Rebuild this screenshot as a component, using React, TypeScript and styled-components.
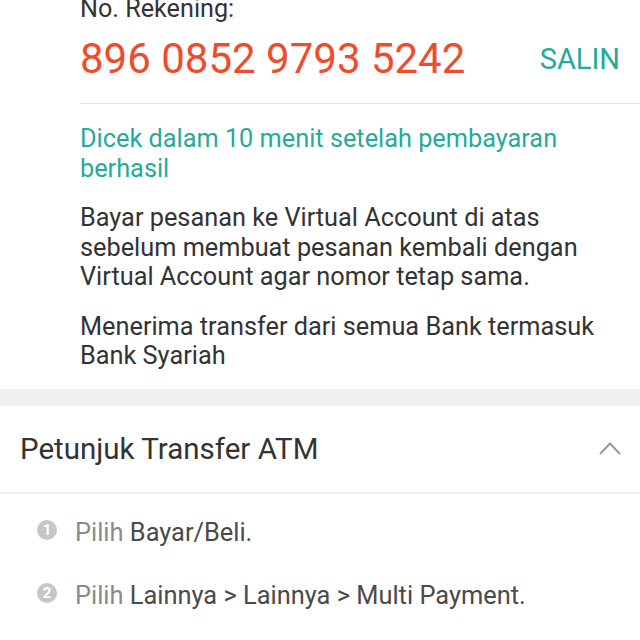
import React from "react";
import styled, { createGlobalStyle } from "styled-components";

const Global = createGlobalStyle`
  html, body { margin: 0; padding: 0; background: #fff; }
  body { font-family: Roboto, "Liberation Sans", sans-serif; color: #333; overflow: hidden; }
`;

const Page = styled.div`
  width: 640px;
  height: 640px;
  overflow: hidden;
  background: #fff;
`;

const AccountSection = styled.section`
  padding-left: 80px;
  padding-bottom: 18px;
`;

const Label = styled.div`
  margin-top: -6px;
  font-size: 25.2px;
  line-height: 30px;
  color: #333;
`;

const NumberRow = styled.div`
  display: flex;
  align-items: center;
  justify-content: space-between;
  margin-top: 10px;
  padding-right: 20px;
  padding-bottom: 19px;
  border-bottom: 1px solid #e4e4e4;
`;

const AccountNumber = styled.div`
  font-size: 42px;
  line-height: 50px;
  color: #ee4d2d;
`;

const CopyButton = styled.button`
  border: none;
  background: none;
  padding: 0;
  font-family: inherit;
  font-size: 29px;
  line-height: 30px;
  color: #26aa99;
  cursor: pointer;
`;

const Info = styled.div`
  padding-right: 30px;
  padding-top: 20px;
`;

const Para = styled.p<{ $accent?: boolean }>`
  margin: 0 0 20px;
  font-size: 25.3px;
  line-height: 29.5px;
  color: ${(p) => (p.$accent ? "#26aa99" : "#333")};
  &:last-child { margin-bottom: 0; }
`;

const Band = styled.div`
  height: 17px;
  background: #efefef;
`;

const AccordionHeader = styled.div`
  display: flex;
  align-items: center;
  justify-content: space-between;
  height: 86px;
  padding: 0 18px 0 20px;
  border-bottom: 2px solid #efefef;
`;

const HeaderTitle = styled.div`
  font-size: 29.5px;
  color: #333;
`;

const Steps = styled.ol`
  list-style: none;
  margin: 0;
  padding: 23px 20px 0 37px;
  display: flex;
  flex-direction: column;
  gap: 33px;
`;

const Step = styled.li`
  display: flex;
  align-items: center;
  gap: 18px;
  font-size: 25.4px;
  line-height: 30px;
`;

const Badge = styled.span`
  flex: none;
  width: 20px;
  height: 20px;
  border-radius: 50%;
  background: #c6c6c6;
  color: #fff;
  font-size: 15px;
  font-weight: 700;
  line-height: 20px;
  text-align: center;
  margin-top: -3px;
`;

const Muted = styled.span`
  color: #8a8a8a;
`;

const Strong = styled.span`
  color: #4a4a4a;
`;

const Chevron = () => (
  <svg width="24" height="16" viewBox="0 0 24 16" fill="none">
    <path d="M2 13 L12 2.5 L22 13" stroke="#999" strokeWidth="2" />
  </svg>
);

export default function App() {
  return (
    <Page>
      <Global />
      <AccountSection>
        <Label>No. Rekening:</Label>
        <NumberRow>
          <AccountNumber>896 0852 9793 5242</AccountNumber>
          <CopyButton>SALIN</CopyButton>
        </NumberRow>
        <Info>
          <Para $accent>Dicek dalam 10 menit setelah pembayaran berhasil</Para>
          <Para>
            Bayar pesanan ke Virtual Account di atas sebelum membuat pesanan kembali dengan Virtual Account agar nomor tetap sama.
          </Para>
          <Para>Menerima transfer dari semua Bank termasuk Bank Syariah</Para>
        </Info>
      </AccountSection>
      <Band />
      <AccordionHeader>
        <HeaderTitle>Petunjuk Transfer ATM</HeaderTitle>
        <Chevron />
      </AccordionHeader>
      <Steps>
        <Step>
          <Badge>1</Badge>
          <span>
            <Muted>Pilih </Muted>
            <Strong>Bayar/Beli.</Strong>
          </span>
        </Step>
        <Step>
          <Badge>2</Badge>
          <span>
            <Muted>Pilih </Muted>
            <Strong>Lainnya &gt; Lainnya &gt; Multi Payment.</Strong>
          </span>
        </Step>
      </Steps>
    </Page>
  );
}
